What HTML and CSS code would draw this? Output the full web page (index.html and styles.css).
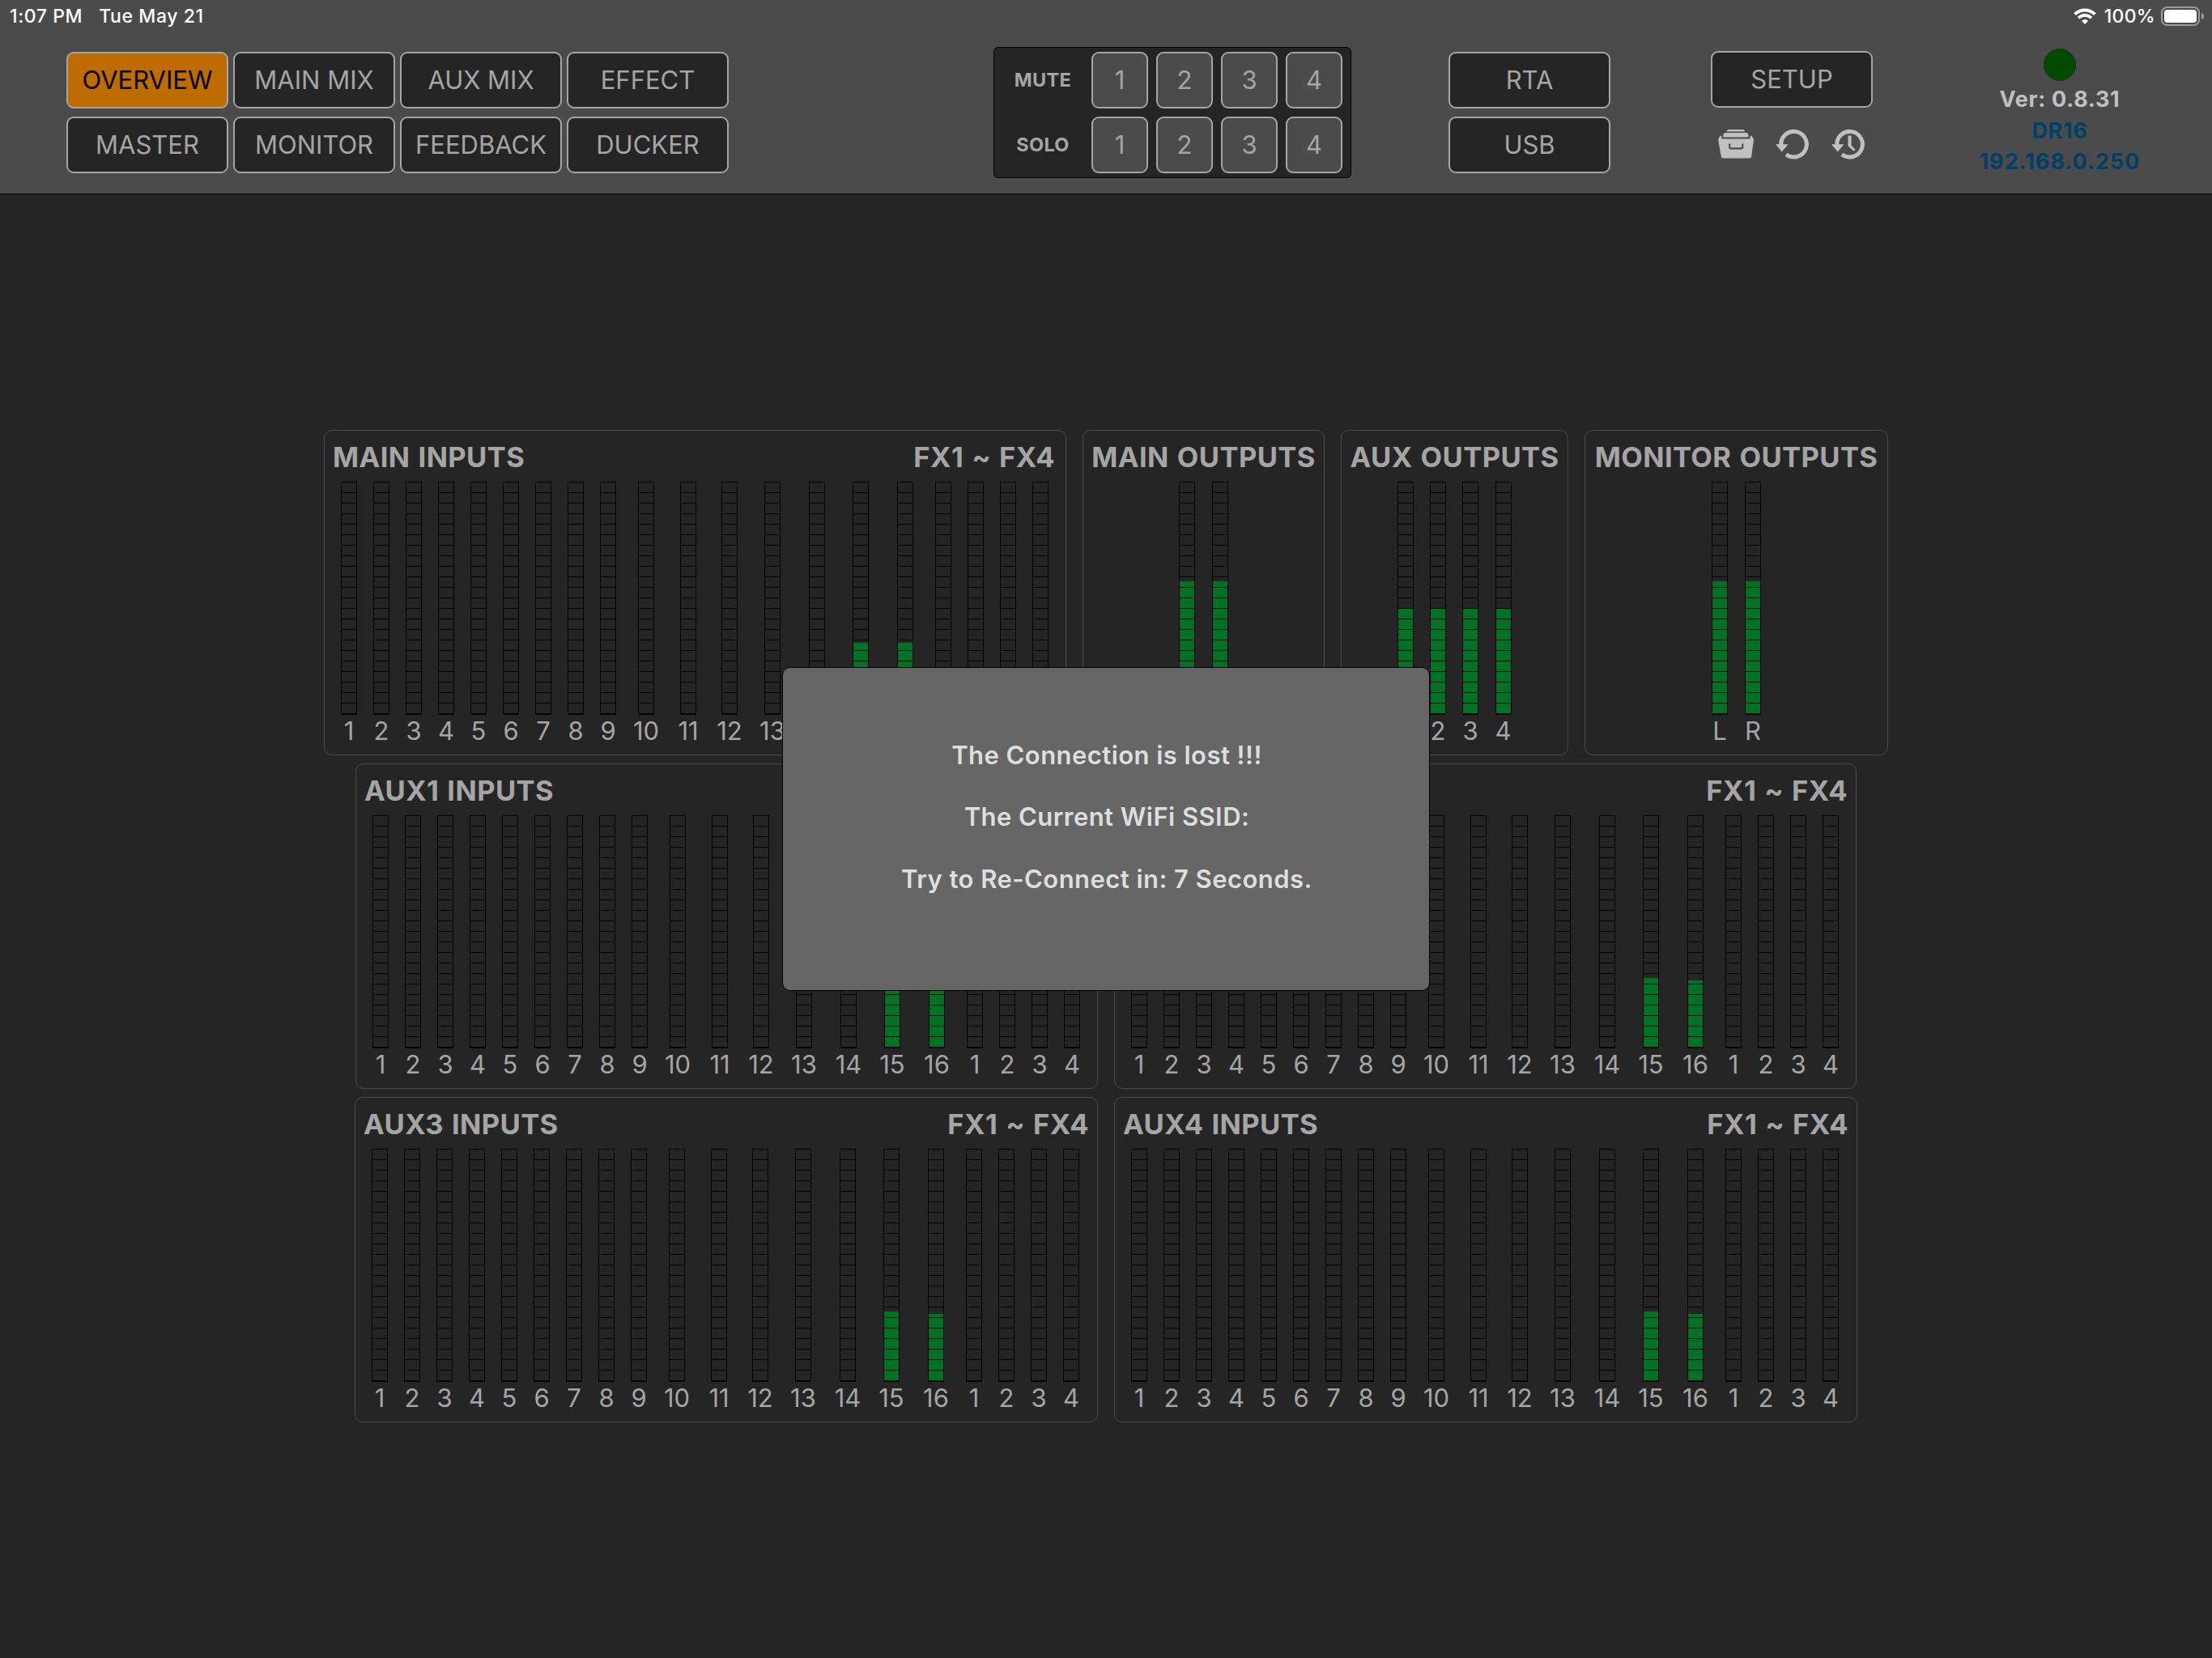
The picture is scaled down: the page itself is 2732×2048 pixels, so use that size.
FILE: index.html
```html
<!DOCTYPE html>
<html lang="en">
<head>
    <meta charset="UTF-8">
    <meta name="viewport" content="width=device-width, initial-scale=1.0">
    <title>DR16 Overview</title>
    <link rel="stylesheet" href="styles.css">
</head>
<body>
    <header class="header">
        <div class="status-bar">
            <span class="time">1:07 PM</span>
            <span class="date">Tue May 21</span>
            <svg class="wifi" viewBox="0 0 28 20" width="28" height="20">
                <path d="M1.6 7.6a17.6 17.6 0 0 1 24.8 0M6.1 12.1a11.2 11.2 0 0 1 15.8 0" fill="none" stroke="#fff" stroke-width="3.8"/>
                <path d="M14 20l-4.1-4.2a5.8 5.8 0 0 1 8.2 0z" fill="#fff"/>
            </svg>
            <span class="percent">100%</span>
            <svg class="battery" viewBox="0 0 54 24" width="54" height="24">
                <rect x="1" y="1" width="46" height="22" rx="6.5" fill="none" stroke="#9b9b9b" stroke-width="2"/>
                <rect x="4" y="4" width="40" height="16" rx="4" fill="#fff"/>
                <path d="M50 8c4 1 4 7 0 8z" fill="#9b9b9b"/>
            </svg>
        </div>
        <div class="toolbar">
            <nav class="tabs">
                <button class="btn active">OVERVIEW</button>
                <button class="btn">MAIN MIX</button>
                <button class="btn">AUX MIX</button>
                <button class="btn">EFFECT</button>
                <button class="btn">MASTER</button>
                <button class="btn">MONITOR</button>
                <button class="btn">FEEDBACK</button>
                <button class="btn">DUCKER</button>
            </nav>
            <div class="groups">
                <span class="group-label">MUTE</span>
                <button class="btn small">1</button>
                <button class="btn small">2</button>
                <button class="btn small">3</button>
                <button class="btn small">4</button>
                <span class="group-label">SOLO</span>
                <button class="btn small">1</button>
                <button class="btn small">2</button>
                <button class="btn small">3</button>
                <button class="btn small">4</button>
            </div>
            <div class="tools">
                <button class="btn">RTA</button>
                <button class="btn">USB</button>
            </div>
            <div class="setup">
                <button class="btn">SETUP</button>
                <div class="icons">
                    <svg class="drawer" viewBox="0 0 44 36" width="44" height="36">
                        <path d="M12.5 0h18.6q1.8 1 2 2.6H10.6q.2-1.6 1.9-2.6z" fill="#c0c0c0"/>
                        <path d="M8.5 4h27q1.6.8 1.8 2.4V9.6H6.4V6.4Q6.700 4.700 8.500 4z" fill="#c0c0c0"/>
                        <path d="M2.800 7.600L4.300 8.600V11.400H39.500V8.600L41.200 7.600L44 12L41.200 33.600q-.3 1.800-2.200 1.800H6q-1.900 0-2.200-1.800L0 12z" fill="#c0c0c0"/>
                        <path d="M14.200 17.500v4.500q0 1.300 1.300 1.300h13.500q1.300 0 1.300-1.300v-4.500" fill="none" stroke="#4b4b4b" stroke-width="2.2"/>
                    </svg>
                    <svg viewBox="0 0 44 38" width="44" height="38">
                        <path d="M7.800 20.500A15.800 15.800 0 1 1 14 31.800" fill="none" stroke="#c0c0c0" stroke-width="5"/>
                        <path d="M1 19.200h15.500l-7.700 9.200z" fill="#c0c0c0"/>
                    </svg>
                    <svg viewBox="0 0 44 38" width="44" height="38">
                        <path d="M7.800 20.500A15.800 15.800 0 1 1 14 31.800" fill="none" stroke="#c0c0c0" stroke-width="5"/>
                        <path d="M1 19.200h15.500l-7.700 9.200z" fill="#c0c0c0"/>
                        <path d="M21.500 8.500h4.100v12l4.900 5.200-1.800 2-7.200-6.200z" fill="#c0c0c0"/>
                    </svg>
                </div>
            </div>
            <div class="device">
                <div class="led"></div>
                <div class="version">Ver: 0.8.31</div>
                <div class="model">DR16</div>
                <div class="address">192.168.0.250</div>
            </div>
        </div>
    </header>

    <main class="overview">
        <div class="row" id="row1"></div>
        <div class="row" id="row2"></div>
        <div class="row" id="row3"></div>
    </main>

    <div class="dialog">
        <p>The Connection is lost !!!</p>
        <p>The Current WiFi SSID:</p>
        <p>Try to Re-Connect in: 7 Seconds.</p>
    </div>

    <script>
        const inputLabels = [1, 2, 3, 4, 5, 6, 7, 8, 9, 10, 11, 12, 13, 14, 15, 16, 1, 2, 3, 4];

        // only channels 15 and 16 carry a signal
        function inputs(level15, level16) {
            return inputLabels.map((label, i) => [label, i === 14 ? level15 : i === 15 ? level16 : 0]);
        }

        function addPanel(rowId, type, title, channels) {
            const meters = channels.map(([label, level]) =>
                `<div class="channel">
                    <div class="meter"><div class="level" style="height:${level}px"></div></div>
                    <span>${label}</span>
                </div>`).join('');
            const fx = type === 'inputs' ? '<h3>FX1 ~ FX4</h3>' : '';
            document.getElementById(rowId).innerHTML +=
                `<section class="panel ${type}">
                    <div class="panel-title"><h3>${title}</h3>${fx}</div>
                    <div class="meters">${meters}</div>
                </section>`;
        }

        addPanel('row1', 'inputs', 'MAIN INPUTS', inputs(87, 87));
        addPanel('row1', 'main-out', 'MAIN OUTPUTS', [['L', 163], ['R', 163]]);
        addPanel('row1', 'aux-out', 'AUX OUTPUTS', [[1, 130], [2, 130], [3, 130], [4, 130]]);
        addPanel('row1', 'monitor-out', 'MONITOR OUTPUTS', [['L', 163], ['R', 163]]);
        addPanel('row2', 'inputs', 'AUX1 INPUTS', inputs(85, 82));
        addPanel('row2', 'inputs', 'AUX2 INPUTS', inputs(85, 82));
        addPanel('row3', 'inputs', 'AUX3 INPUTS', inputs(85, 82));
        addPanel('row3', 'inputs', 'AUX4 INPUTS', inputs(85, 82));
    </script>
</body>
</html>
```
FILE: styles.css
```css
* {
    box-sizing: border-box;
}
body {
    font-family: Inter, "Liberation Sans", sans-serif;
    background: #252525;
    color: #a5a5a5;
    margin: 0;
    height: 2048px;
    overflow: hidden;
}
.header {
    background: #4b4b4b;
    border-bottom: 1px solid #000;
    height: 240px;
}
.status-bar {
    display: flex;
    align-items: center;
    height: 40px;
    padding: 0 9px 0 12px;
    color: #fff;
    font-size: 23px;
    font-weight: 500;
    letter-spacing: 0.6px;
}
.date {
    margin-left: 20px;
}
.wifi {
    margin-left: auto;
}
.percent {
    margin: 0 7px 0 10px;
    letter-spacing: 0.3px;
}
.toolbar {
    display: flex;
    align-items: flex-start;
    padding: 24px 0 0 82px;
}
.btn {
    width: 200px;
    height: 70px;
    padding: 0 0 2px;
    border: 2px solid #a5a5a5;
    border-radius: 9px;
    background: #252525;
    color: #a5a5a5;
    font-family: inherit;
    font-size: 31px;
    font-weight: 400;
    white-space: nowrap;
}
.btn.active {
    background: #be6b00;
    color: #000;
}
.btn.small {
    width: 70px;
    background: #4b4b4b;
}
.tabs {
    display: grid;
    grid-template-columns: repeat(4, 200px);
    gap: 10px 6px;
}
.groups {
    display: grid;
    grid-template-columns: 110px repeat(4, 70px);
    gap: 10px;
    align-items: center;
    width: 442px;
    height: 162px;
    margin: -6px 0 0 327px;
    padding: 5px 0 5px 0;
    border: 1px solid #000;
    border-radius: 6px;
    background: #252525;
}
.group-label {
    padding: 0 0 1px 10px;
    text-align: center;
    font-size: 23.5px;
    font-weight: 700;
    letter-spacing: 0.3px;
}
.tools {
    display: grid;
    gap: 10px;
    margin-left: 120px;
}
.setup {
    width: 200px;
    margin: -1px 0 0 124px;
}
.icons {
    display: flex;
    align-items: flex-start;
    gap: 25.5px;
    margin: 26px 0 0 9px;
}
.drawer {
    margin-top: 1px;
}
.device {
    width: 300px;
    margin: -4px 0 0 81px;
    text-align: center;
    font-size: 27px;
    font-weight: 700;
    line-height: 38.5px;
    letter-spacing: 0.7px;
}
.led {
    width: 40px;
    height: 40px;
    margin: 0 auto 4px;
    border: 1px solid #252525;
    border-radius: 50%;
    background: #004b00;
}
.version {
    color: #c0c0c0;
}
.model, .address {
    color: #004068;
}
.address {
    letter-spacing: 1px;
}
.overview {
    display: flex;
    flex-direction: column;
    gap: 10px;
    padding-top: 291px;
}
.row {
    display: flex;
    justify-content: center;
    gap: 20px;
}
.panel {
    height: 402px;
    border: 1px solid #4b4b4b;
    border-radius: 10px;
}
.inputs {
    width: 917px;
}
#row3 .inputs {
    width: 918px;
}
.main-out {
    width: 299px;
}
.aux-out {
    width: 281px;
}
.monitor-out {
    width: 375px;
}
.panel-title {
    display: flex;
    justify-content: center;
    height: 63px;
    padding: 11px 0 0;
}
.inputs .panel-title {
    justify-content: space-between;
    padding: 11px 13px 0 10px;
}
#row2 .panel-title, #row3 .panel-title {
    padding-right: 10px;
}
h3 {
    margin: 0;
    font-size: 34.5px;
    font-weight: 700;
    line-height: 44px;
    letter-spacing: 0.4px;
    word-spacing: 1.5px;
    white-space: nowrap;
}
.meters {
    display: grid;
    grid-auto-flow: column;
    grid-auto-columns: 41px;
    justify-content: center;
}
.aux-out .meters {
    grid-template-columns: 40px 40px 40px 41px;
}
.inputs .meters {
    grid-template-columns: repeat(9, 40px) 54px 50px 52px 54px 56px 52px 56px repeat(4, 40px);
    justify-content: start;
    padding-left: 10px;
}
.channel {
    display: flex;
    flex-direction: column;
    align-items: center;
    font-size: 31px;
    line-height: 40px;
}
.channel:nth-child(16) {
    padding-left: 2px;
}
.meter {
    position: relative;
    display: flex;
    flex-direction: column;
    justify-content: flex-end;
    width: 20px;
    height: 288px;
    border: solid #000;
    border-width: 0 1px 2px;
}
/* segment lines over the level */
.meter::after {
    content: "";
    position: absolute;
    inset: 0;
    background: repeating-linear-gradient(#000 0 1px, transparent 1px 13px);
}
.level {
    background: #007224;
}
.dialog {
    position: absolute;
    left: 966px;
    top: 824px;
    display: flex;
    flex-direction: column;
    justify-content: center;
    width: 800px;
    height: 400px;
    padding: 0 0 29px 2px;
    border: 1px solid #000;
    border-radius: 10px;
    background: #666;
    color: #dedede;
    text-align: center;
    font-size: 31px;
    font-weight: 600;
    line-height: 76.5px;
    letter-spacing: 0.45px;
}
.dialog p {
    margin: 0;
}
```
